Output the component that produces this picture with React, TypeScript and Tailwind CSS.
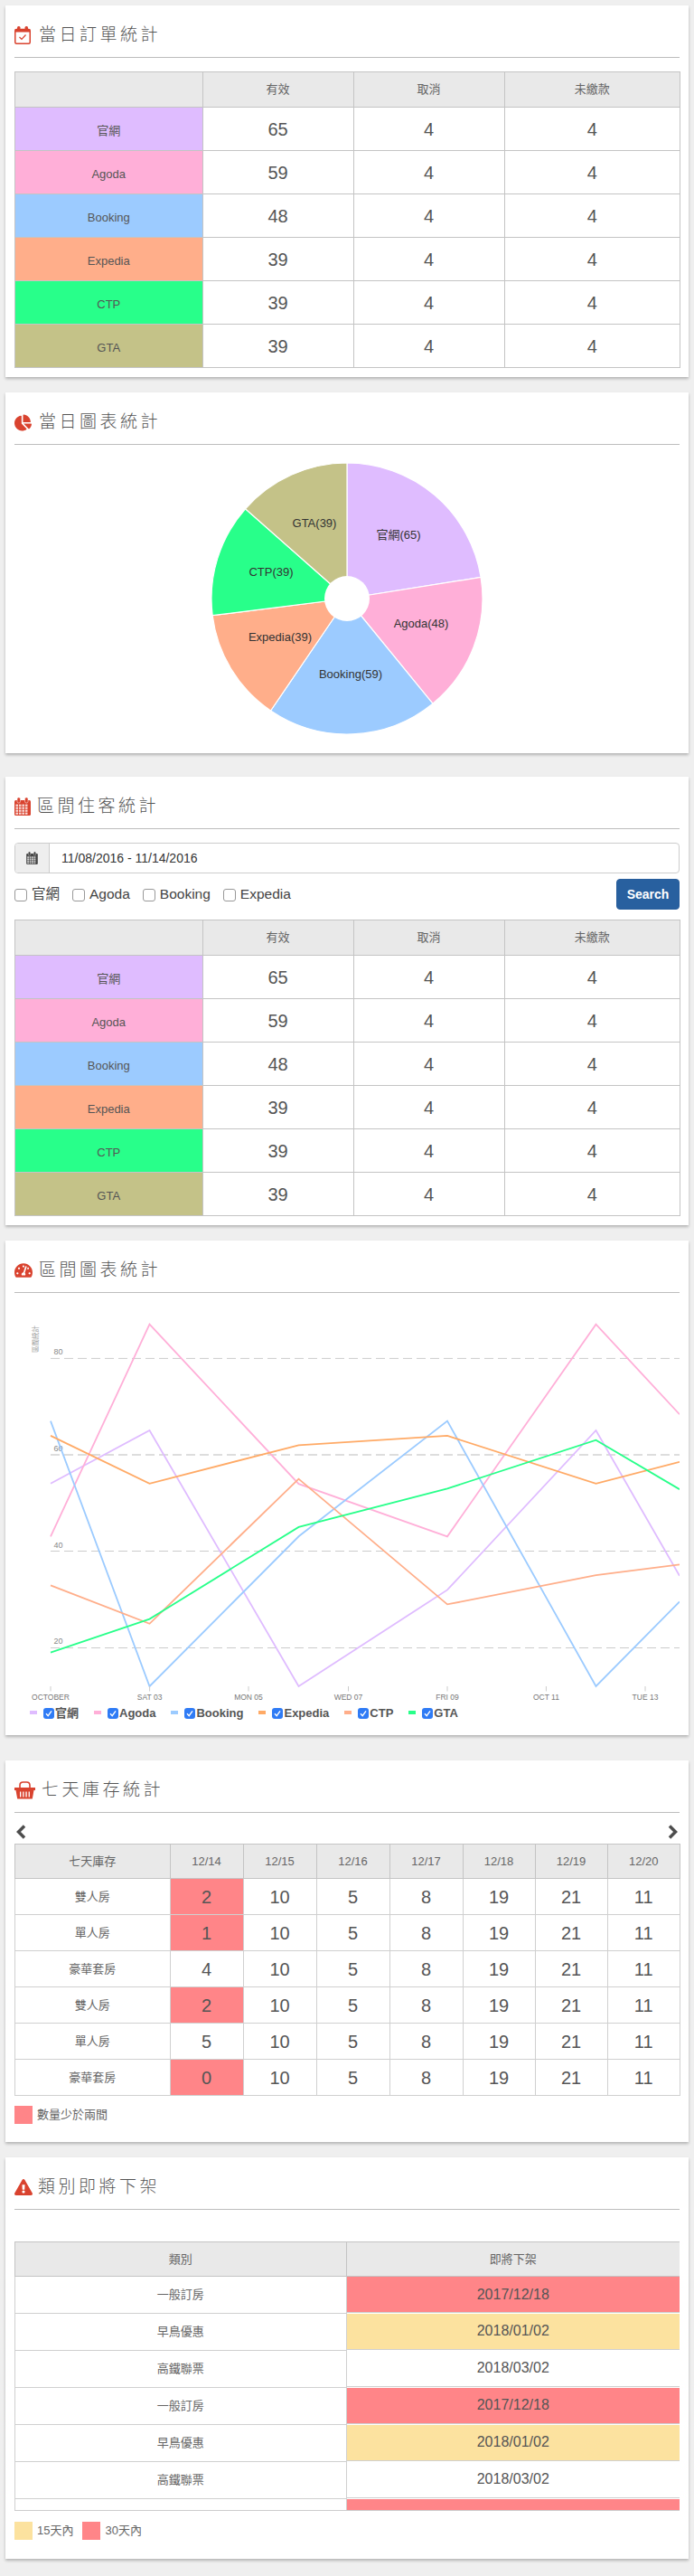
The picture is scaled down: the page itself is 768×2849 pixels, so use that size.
import type { ReactNode } from 'react';
import { FaChartPie, FaExclamationTriangle, FaTachometerAlt } from 'react-icons/fa';

const channels = [
  { name: '官網', bg: 'bg-[#dfbcff]', color: '#dfbcff', valid: 65, pie: 65, lx: 57, ly: -71 },
  { name: 'Agoda', bg: 'bg-[#ffafd8]', color: '#ffafd8', valid: 59, pie: 48, lx: 82, ly: 27 },
  { name: 'Booking', bg: 'bg-[#9ccbff]', color: '#9ccbff', valid: 48, pie: 59, lx: 4, ly: 83 },
  { name: 'Expedia', bg: 'bg-[#ffae8a]', color: '#ffae8a', valid: 39, pie: 39, lx: -74, ly: 42 },
  { name: 'CTP', bg: 'bg-[#28ff8a]', color: '#28ff8a', valid: 39, pie: 39, lx: -84, ly: -30 },
  { name: 'GTA', bg: 'bg-[#c4c288]', color: '#c4c288', valid: 39, pie: 39, lx: -36, ly: -84 },
];

const chartX = [40, 149.5, 314.5, 479, 643.5, 736];
const series = [
  { name: '官網', color: '#dfbcff', ys: [200.8, 142, 425, 318.4, 142, 302.9] },
  { name: 'Agoda', color: '#ffafd8', ys: [259.3, 24.7, 201.2, 259.3, 24.7, 124.2] },
  { name: 'Booking', color: '#9ccbff', ys: [131.6, 425, 259.3, 131.6, 425, 331.4] },
  { name: 'Expedia', color: '#ffaa66', ys: [147.9, 200.8, 158.3, 147.9, 200.8, 176.8] },
  { name: 'CTP', color: '#ffae8a', ys: [313.3, 355.8, 195.6, 334.4, 302.2, 290.3] },
  { name: 'GTA', color: '#28ff8a', ys: [387.6, 350.6, 248.9, 206.4, 152.7, 207.1] },
];
const ticks = [
  { x: 40, label: 'OCTOBER' },
  { x: 149.6, label: 'SAT 03' },
  { x: 259, label: 'MON 05' },
  { x: 369.5, label: 'WED 07' },
  { x: 479, label: 'FRI 09' },
  { x: 588.4, label: 'OCT 11' },
  { x: 698, label: 'TUE 13' },
];

const stock = [
  { room: '雙人房', first: 2, low: true },
  { room: '單人房', first: 1, low: true },
  { room: '豪華套房', first: 4, low: false },
  { room: '雙人房', first: 2, low: true },
  { room: '單人房', first: 5, low: false },
  { room: '豪華套房', first: 0, low: true },
];
const stockDays = ['12/15', '12/16', '12/17', '12/18', '12/19', '12/20'];
const stockValues = [10, 5, 8, 19, 21, 11];

const expiring = [
  { type: '一般訂房', date: '2017/12/18', bg: 'bg-[#ff8588]' },
  { type: '早鳥優惠', date: '2018/01/02', bg: 'bg-[#fce29f]' },
  { type: '高鐵聯票', date: '2018/03/02', bg: 'bg-white' },
  { type: '一般訂房', date: '2017/12/18', bg: 'bg-[#ff8588]' },
  { type: '早鳥優惠', date: '2018/01/02', bg: 'bg-[#fce29f]' },
  { type: '高鐵聯票', date: '2018/03/02', bg: 'bg-white' },
  { type: '一般訂房', date: '2017/12/18', bg: 'bg-[#ff8588]' },
];

const th = 'border border-[#c4c4c4] bg-[#e9e9e9] text-center text-[13px] font-normal text-[#666] p-0';
const td = 'border border-[#c4c4c4] text-center p-0';

function Card({ title, icon, className, children }: { title: string; icon: ReactNode; className: string; children: ReactNode }) {
  return (
    <section className={`bg-white px-[10px] shadow-[0_2px_3px_rgba(0,0,0,0.25)] ${className}`}>
      <div className="h-[58px] pt-[20px] border-b border-[#bdbdbd]">
        <h2 className="flex items-center h-[26px] text-[19px] font-light tracking-[3.5px] text-[#555]">
          {icon}
          {title}
        </h2>
      </div>
      {children}
    </section>
  );
}

function CalendarCheckIcon() {
  return (
    <svg width="18" height="20" viewBox="0 0 18 20" className="mr-[9px] shrink-0">
      <rect x="0.75" y="3.5" width="16.5" height="15.75" rx="1.5" fill="white" stroke="#d9432f" strokeWidth="1.5" />
      <rect x="0.75" y="3.5" width="16.5" height="3" fill="#d9432f" />
      <rect x="3" y="0" width="3.5" height="6" rx="1.5" fill="#d9432f" />
      <rect x="11.5" y="0" width="3.5" height="6" rx="1.5" fill="#d9432f" />
      <path d="M5.5 12 L8 14.5 L12.5 9.5" fill="none" stroke="#d9432f" strokeWidth="1.2" />
    </svg>
  );
}

function CalendarGrid({ fill, className }: { fill: string; className: string }) {
  const cols = [3, 6.5, 10, 13.5];
  const rows = [8, 11, 14, 17];
  return (
    <svg viewBox="0 0 18 20" className={className}>
      <rect x="0" y="3" width="18" height="17" rx="1.5" fill={fill} />
      <rect x="3" y="0" width="3.5" height="6" rx="1.5" fill={fill} stroke="white" strokeWidth="0.5" />
      <rect x="11.5" y="0" width="3.5" height="6" rx="1.5" fill={fill} stroke="white" strokeWidth="0.5" />
      {rows.map((y) =>
        cols.map((x) => <rect key={`${x}-${y}`} x={x - 1.6} y={y - 0.4} width="2.6" height="2.2" fill="white" opacity="0.8" />),
      )}
    </svg>
  );
}

function BasketIcon() {
  return (
    <svg width="23" height="20" viewBox="0 0 23 20" className="mr-[7px] shrink-0">
      <path d="M6 8 V4.5 Q6 1 9.5 1 H13.5 Q17 1 17 4.5 V8" fill="none" stroke="#d9432f" strokeWidth="1.6" />
      <rect x="0" y="7" width="23" height="3" fill="#d9432f" />
      <path d="M1.5 10 H21.5 L19.8 19.5 H3.2 Z" fill="#d9432f" />
      {[6, 9.2, 12.4, 15.6].map((x) => (
        <rect key={x} x={x} y="11.5" width="1.3" height="6" fill="white" />
      ))}
    </svg>
  );
}

function StatTable({ className }: { className: string }) {
  return (
    <table className={`w-[736px] table-fixed border-collapse ${className}`}>
      <colgroup>
        <col className="w-[207.5px]" />
        <col className="w-[167px]" />
        <col className="w-[167px]" />
        <col className="w-[194.5px]" />
      </colgroup>
      <thead>
        <tr className="h-[39px]">
          <th className={th}></th>
          <th className={th}>有效</th>
          <th className={th}>取消</th>
          <th className={th}>未繳款</th>
        </tr>
      </thead>
      <tbody>
        {channels.map((c) => (
          <tr key={c.name} className="h-[48px]">
            <td className={`${td} ${c.bg} text-[13px] text-[#555] pt-[5px]`}>{c.name}</td>
            <td className={`${td} text-[20px] text-[#555]`}>{c.valid}</td>
            <td className={`${td} text-[20px] text-[#555]`}>4</td>
            <td className={`${td} text-[20px] text-[#555]`}>4</td>
          </tr>
        ))}
      </tbody>
    </table>
  );
}

function PieChart() {
  const total = channels.reduce((sum, c) => sum + c.pie, 0);
  let angle = 0;
  const point = (a: number) => [150 + 150 * Math.sin(a), 150 - 150 * Math.cos(a)];
  return (
    <svg width="300" height="300" viewBox="0 0 300 300" className="mx-auto mt-[20px]">
      {channels.map((c) => {
        const start = angle;
        angle += (c.pie / total) * Math.PI * 2;
        const [x1, y1] = point(start);
        const [x2, y2] = point(angle);
        return (
          <path
            key={c.name}
            d={`M150 150 L${x1} ${y1} A150 150 0 0 1 ${x2} ${y2} Z`}
            fill={c.color}
            stroke="white"
            strokeWidth="1.2"
          />
        );
      })}
      <circle cx="150" cy="150" r="25" fill="white" />
      {channels.map((c) => (
        <text key={c.name} x={150 + c.lx} y={154.5 + c.ly} textAnchor="middle" fontSize="13" fill="#333">
          {c.name}({c.pie})
        </text>
      ))}
    </svg>
  );
}

function LineChart() {
  return (
    <svg width="736" height="445" viewBox="0 0 736 445" className="mt-[10px] block">
      <text x="0" y="0" transform="translate(26 41) rotate(-90)" textAnchor="middle" fontSize="7.5" fill="#999">
        區間統計
      </text>
      {[
        { y: 62.4, label: '80', ly: 58 },
        { y: 169, label: '60', ly: 165 },
        { y: 275.5, label: '40', ly: 272 },
        { y: 382.5, label: '20', ly: 378 },
      ].map((g) => (
        <g key={g.label}>
          <line
            x1="40"
            x2="736"
            y1={g.y}
            y2={g.y}
            stroke={g.label === '60' ? '#dddddd' : '#cccccc'}
            strokeWidth={g.label === '60' ? 2 : 1}
            strokeDasharray="10 5"
          />
          <text x="48.5" y={g.ly} textAnchor="middle" fontSize="9" fill="#888">
            {g.label}
          </text>
        </g>
      ))}
      {series.map((s) => (
        <polyline
          key={s.name}
          points={s.ys.map((y, i) => `${chartX[i]},${y}`).join(' ')}
          fill="none"
          stroke={s.color}
          strokeWidth="1.8"
        />
      ))}
      {ticks.map((t) => (
        <g key={t.label}>
          <line x1={t.x} x2={t.x} y1="425" y2="430.5" stroke="#ccc" />
          <text x={t.x} y="440" textAnchor="middle" fontSize="8.5" fill="#777">
            {t.label}
          </text>
        </g>
      ))}
    </svg>
  );
}

function ChartLegend() {
  return (
    <div className="flex items-center h-[20px] pl-[17px] gap-[17px]">
      {series.map((s) => (
        <div key={s.name} className="flex items-center">
          <svg width="8" height="4" viewBox="0 0 8 4" className="mr-[7px] -mt-[3px]">
            <rect width="8" height="4" fill={s.color} />
          </svg>
          <svg width="12" height="12" viewBox="0 0 12 12" className="mr-px">
            <rect width="12" height="12" rx="3" fill="#2f7bf5" />
            <path d="M3 6.2 L5.2 8.6 L9 3.4" fill="none" stroke="white" strokeWidth="1.4" />
          </svg>
          <span className="text-[13px] font-bold text-[#555]">{s.name}</span>
        </div>
      ))}
    </div>
  );
}

function Swatch({ bg, label }: { bg: string; label: string }) {
  return (
    <div className="flex items-center">
      <span className={`w-[20px] h-[20px] mr-[5px] ${bg}`}></span>
      <span className="text-[13px] text-[#666]">{label}</span>
    </div>
  );
}

export default function App() {
  return (
    <div className="min-h-[2849px] bg-[#efefef] px-[6px] pt-[6px] [font-family:'Liberation_Sans','Noto_Sans_CJK_TC',sans-serif]">
      <Card title="當日訂單統計" className="pb-[10px]" icon={<CalendarCheckIcon />}>
        <StatTable className="mt-[15px]" />
      </Card>

      <Card
        title="當日圖表統計"
        className="mt-[17px] pb-[21px]"
        icon={<FaChartPie className="mr-[8px] shrink-0 text-[19px] text-[#d9432f]" />}
      >
        <PieChart />
      </Card>

      <Card
        title="區間住客統計"
        className="mt-[26px] pb-[10px]"
        icon={<CalendarGrid fill="#d9432f" className="w-[18px] h-[20px] mr-[7px] shrink-0" />}
      >
        <div className="mt-[15px] flex h-[34px] rounded border border-[#ccc] overflow-hidden">
          <div className="flex w-[38px] items-center justify-center border-r border-[#ccc] bg-[#eee]">
            <CalendarGrid fill="#444" className="w-[13px] h-[14px]" />
          </div>
          <div className="flex items-center pl-[13px] text-[14px] text-[#333]">11/08/2016 - 11/14/2016</div>
        </div>
        <div className="mt-[6px] flex h-[34px] items-center justify-between">
          <div className="flex items-center gap-[14px] text-[15.5px] text-[#444]">
            {['官網', 'Agoda', 'Booking', 'Expedia'].map((name) => (
              <label key={name} className="flex items-center gap-[5px]">
                <input
                  type="checkbox"
                  className="appearance-none w-[14px] h-[14px] mt-[2px] rounded-[3px] border border-[#999] bg-white"
                />
                {name}
              </label>
            ))}
          </div>
          <button className="w-[70px] h-[34px] rounded bg-[#28609f] border border-[#285e9c] text-[14px] font-bold text-white">
            Search
          </button>
        </div>
        <StatTable className="mt-[11px]" />
      </Card>

      <Card
        title="區間圖表統計"
        className="mt-[17px] pb-[14px]"
        icon={<FaTachometerAlt className="mr-[7px] shrink-0 text-[20px] text-[#d9432f]" />}
      >
        <LineChart />
        <ChartLegend />
      </Card>

      <Card
        title="七天庫存統計"
        className="mt-[28px] pb-[20px]"
        icon={<BasketIcon />}
      >
        <div className="flex h-[34px] items-start justify-between pt-[13px] pl-[2px] pr-[2px]">
          <svg width="11" height="16" viewBox="0 0 11 16">
            <path d="M9 1.5 L2.5 8 L9 14.5" fill="none" stroke="#4d4d4d" strokeWidth="3.5" />
          </svg>
          <svg width="11" height="16" viewBox="0 0 11 16">
            <path d="M2 1.5 L8.5 8 L2 14.5" fill="none" stroke="#4d4d4d" strokeWidth="3.5" />
          </svg>
        </div>
        <table className="w-[736px] table-fixed border-collapse">
          <colgroup>
            <col className="w-[171.5px]" />
            <col className="w-[81px]" />
            <col className="w-[81px]" />
            <col className="w-[81px]" />
            <col className="w-[81px]" />
            <col className="w-[80px]" />
            <col className="w-[80px]" />
            <col className="w-[80.5px]" />
          </colgroup>
          <thead>
            <tr className="h-[38px]">
              <th className={th}>七天庫存</th>
              <th className={th}>12/14</th>
              {stockDays.map((day) => (
                <th key={day} className={th}>
                  {day}
                </th>
              ))}
            </tr>
          </thead>
          <tbody>
            {stock.map((row, i) => (
              <tr key={i} className="h-[40px]">
                <td className={`${td} border-[#d0d0d0] text-[13px] text-[#666]`}>{row.room}</td>
                <td className={`${td} border-[#d0d0d0] text-[20px] text-[#555] ${row.low ? 'bg-[#ff8588]' : ''}`}>{row.first}</td>
                {stockValues.map((v, j) => (
                  <td key={j} className={`${td} border-[#d0d0d0] text-[20px] text-[#555]`}>
                    {v}
                  </td>
                ))}
              </tr>
            ))}
          </tbody>
        </table>
        <div className="mt-[11px] flex">
          <Swatch bg="bg-[#ff8588]" label="數量少於兩間" />
        </div>
      </Card>

      <Card
        title="類別即將下架"
        className="mt-[17px] pb-[21px]"
        icon={<FaExclamationTriangle className="mr-[6px] shrink-0 text-[20px] text-[#d9432f]" />}
      >
        <div className="mt-[35px] h-[298px] overflow-hidden border-b border-[#ccc]">
          <table className="w-[736px] table-fixed border-collapse">
            <colgroup>
              <col className="w-[366.5px]" />
              <col className="w-[369.5px]" />
            </colgroup>
            <thead>
              <tr className="h-[38px]">
                <th className={th}>類別</th>
                <th className={th}>即將下架</th>
              </tr>
            </thead>
            <tbody>
              {expiring.map((row, i) => (
                <tr key={i} className="h-[41px]">
                  <td className={`${td} border-[#d0d0d0] text-[13px] text-[#666]`}>{row.type}</td>
                  <td className="border-x border-[#d0d0d0] p-0 align-top">
                    <div className={`flex h-[40px] items-center justify-center border-b border-[#d0d0d0] text-[16px] text-[#555] ${row.bg}`}>
                      {row.date}
                    </div>
                  </td>
                </tr>
              ))}
            </tbody>
          </table>
        </div>
        <div className="mt-[12px] flex gap-[10px]">
          <Swatch bg="bg-[#fce29f]" label="15天內" />
          <Swatch bg="bg-[#ff8588]" label="30天內" />
        </div>
      </Card>
    </div>
  );
}
